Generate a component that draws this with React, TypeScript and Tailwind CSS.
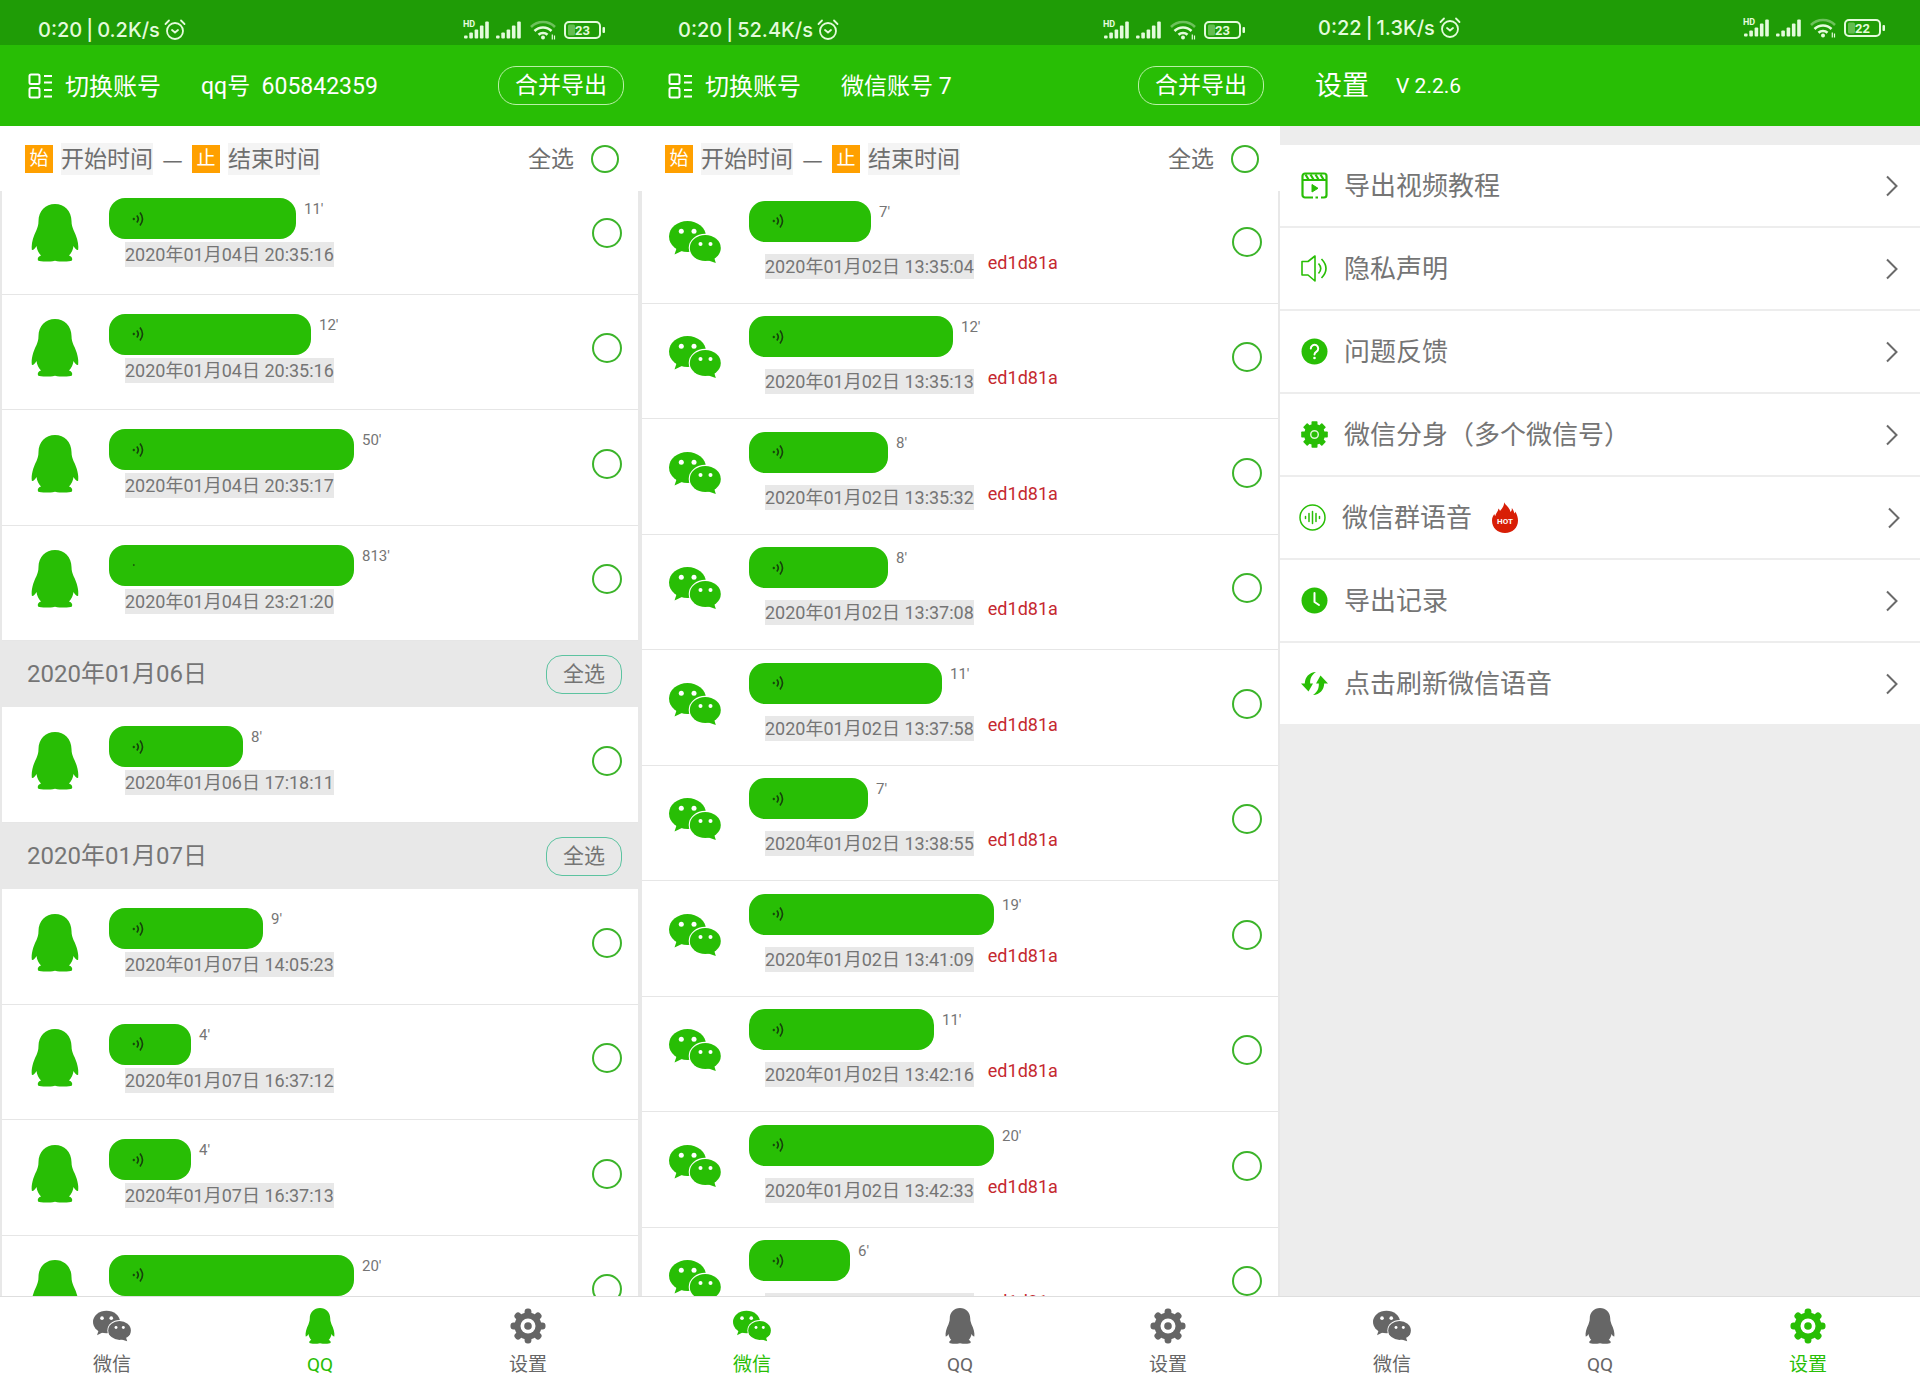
import type { ReactNode } from 'react'
import clsx from 'clsx'

type Voice = { length: string; width: number; time: string; silent?: boolean }
type Tab = 'wechat' | 'qq' | 'settings'

const qqGroups: { date?: string; items: Voice[] }[] = [
  {
    items: [
      { length: "11'", width: 187, time: '2020年01月04日 20:35:16' },
      { length: "12'", width: 202, time: '2020年01月04日 20:35:16' },
      { length: "50'", width: 245, time: '2020年01月04日 20:35:17' },
      { length: "813'", width: 245, time: '2020年01月04日 23:21:20', silent: true },
    ],
  },
  {
    date: '2020年01月06日',
    items: [{ length: "8'", width: 134, time: '2020年01月06日 17:18:11' }],
  },
  {
    date: '2020年01月07日',
    items: [
      { length: "9'", width: 154, time: '2020年01月07日 14:05:23' },
      { length: "4'", width: 82, time: '2020年01月07日 16:37:12' },
      { length: "4'", width: 82, time: '2020年01月07日 16:37:13' },
      { length: "20'", width: 245, time: '2020年01月07日 16:40:02' },
    ],
  },
]

const wechatItems: Voice[] = [
  { length: "7'", width: 122, time: '2020年01月02日 13:35:04' },
  { length: "12'", width: 204, time: '2020年01月02日 13:35:13' },
  { length: "8'", width: 139, time: '2020年01月02日 13:35:32' },
  { length: "8'", width: 139, time: '2020年01月02日 13:37:08' },
  { length: "11'", width: 193, time: '2020年01月02日 13:37:58' },
  { length: "7'", width: 119, time: '2020年01月02日 13:38:55' },
  { length: "19'", width: 245, time: '2020年01月02日 13:41:09' },
  { length: "11'", width: 185, time: '2020年01月02日 13:42:16' },
  { length: "20'", width: 245, time: '2020年01月02日 13:42:33' },
  { length: "6'", width: 101, time: '2020年01月02日 13:43:20' },
]

function PenguinIcon({ className }: { className?: string }) {
  return (
    <svg viewBox="0 0 47 58" fill="currentColor" className={className} aria-hidden="true">
      <path d="M23.5 0C33 0 40 7 40 17c0 4 1 6 2 9 3.5 7 5.5 14 4.6 20-1.8.2-3.3-1.8-4.6-4-.5 4-2 7-4.5 9.5 2.8 1 3.7 2.5 3 5-2.5 1.300-11 1.5-17 .2-6 1.3-14.5 1.1-17-.2-.7-2.5.2-4 3-5C7 49 5.5 46 5 42c-1.3 2.2-2.8 4.2-4.6 4C-.5 40 1.5 33 5 26c1-3 2-5 2-9C7 7 14 0 23.5 0Z" />
    </svg>
  )
}

function WechatIcon({ className }: { className?: string }) {
  return (
    <svg viewBox="0 0 52 42" fill="currentColor" className={className} aria-hidden="true">
      <ellipse cx="18.5" cy="15.5" rx="18.5" ry="15.5" />
      <path d="M8 26 5.5 33.5 15 29Z" />
      <ellipse cx="36.3" cy="27" rx="16.6" ry="14.2" fill="#fff" />
      <ellipse cx="36.3" cy="27" rx="15.5" ry="13" />
      <path d="m45 36 1.8 6L38 39Z" />
      <g fill="#fff">
        <circle cx="12.3" cy="10.3" r="2.5" />
        <circle cx="25" cy="10.3" r="2.5" />
        <circle cx="31.5" cy="23" r="2" />
        <circle cx="41.5" cy="23" r="2" />
      </g>
    </svg>
  )
}

function GearIcon({ className }: { className?: string }) {
  return (
    <svg viewBox="-18 -18 36 36" fill="currentColor" className={className} aria-hidden="true">
      {[0, 45, 90, 135].map((a) => (
        <rect key={a} x="-3.4" y="-17.5" width="6.8" height="35" rx="3" transform={`rotate(${a})`} />
      ))}
      <circle r="13.5" />
      <circle r="7.5" fill="#fff" />
      <circle r="3.8" />
    </svg>
  )
}

function StatusIcons({ battery }: { battery: string }) {
  const bars = [3, 6, 9, 13, 17]
  return (
    <svg viewBox="0 0 143 22" className="h-[22px] w-[143px]" fill="#e4fbdc" aria-hidden="true">
      <text x="0" y="8" fontSize="9" fontWeight="700">HD</text>
      {bars.map((h, i) => (
        <rect key={h} x={1 + i * 5.3} y={19.5 - h} width="3.6" height={h} rx="1" />
      ))}
      {bars.map((h, i) => (
        <rect key={h} x={33 + i * 5.3} y={19.5 - h} width="3.6" height={h} rx="1" />
      ))}
      <g fill="none" stroke="#e4fbdc" strokeWidth="2.6">
        <path d="M68 8a17 17 0 0 1 24 0" opacity=".4" />
        <path d="M71.5 12a12 12 0 0 1 17 0" />
        <path d="M75.5 15.8a6.5 6.5 0 0 1 9 0" />
      </g>
      <circle cx="80" cy="18.5" r="2" />
      <path d="M89.3 15.5v5M91.5 16.5v4" stroke="#e4fbdc" strokeWidth="1.2" />
      <rect x="102" y="3" width="35" height="16" rx="4" fill="none" stroke="#e4fbdc" strokeWidth="2" />
      <rect x="105" y="5.5" width="7" height="11" rx="1.5" opacity=".35" />
      <rect x="139.5" y="8" width="2.5" height="6" rx="1" />
      <text x="119.5" y="15.5" fontSize="13" fontWeight="700" textAnchor="middle">{battery}</text>
    </svg>
  )
}

function StatusBar({ time, speed, battery, raised }: { time: string; speed: string; battery: string; raised?: boolean }) {
  return (
    <div
      className={clsx(
        'flex h-[45px] shrink-0 items-center justify-between bg-[#1f9c06] pl-[38px] pr-[34px] text-[#e4fbdc]',
        raised ? 'pt-[11px]' : 'pt-[15px]',
      )}
    >
      <div className="flex items-center font-['Inter'] text-xl leading-5 font-medium">
        <span>{time}</span>
        <span className="mx-1">|</span>
        <span>{speed}</span>
        <svg viewBox="0 0 22 22" fill="none" stroke="currentColor" strokeWidth="1.8" strokeLinecap="round" className="ml-1 size-[22px]" aria-hidden="true">
          <circle cx="11" cy="12" r="8" />
          <path d="M8 11l3 2.5 3-2.5M1.5 5 5 1.5M20.5 5 17 1.5" />
        </svg>
      </div>
      <StatusIcons battery={battery} />
    </div>
  )
}

function AccountHeader({ account }: { account: string }) {
  return (
    <header className="flex h-[81px] shrink-0 items-center bg-[#28be05] pl-7 pr-4 text-white">
      <button type="button" className="flex items-center gap-3 text-2xl leading-8">
        <svg viewBox="0 0 25 26" fill="none" stroke="currentColor" strokeWidth="2" className="h-[26px] w-[25px]" aria-hidden="true">
          <rect x="1.5" y="1.5" width="10" height="9.5" rx="1.5" />
          <rect x="1.5" y="15" width="10" height="9.5" rx="1.5" />
          <path d="M16 3h8M16 9.5h8M16 17h8M16 23.5h8" />
        </svg>
        <span className="pt-0.5">切换账号</span>
      </button>
      <span className="ml-10 pt-0.5 text-[23px] leading-8 whitespace-pre">{account}</span>
      <button type="button" className="ml-auto h-[39px] rounded-[18px] border border-[#b9f0a8] px-4 text-[23px] leading-8">
        合并导出
      </button>
    </header>
  )
}

function Circle({ label, className }: { label: string; className: string }) {
  return (
    <input
      type="checkbox"
      aria-label={label}
      className={clsx('shrink-0 appearance-none rounded-full border-2 border-[#3cb42a] bg-white checked:bg-[#28be05]', className)}
    />
  )
}

function FilterBar() {
  return (
    <div className="flex h-[65px] shrink-0 items-center gap-2 bg-white pl-[25px] pr-[21px] text-[23px] leading-[31px] text-[#6e6e6e]">
      <span className="size-7 bg-[#ffa000] text-center text-[19px] leading-7 text-white">始</span>
      <button type="button" className="bg-[#f4f4f4] pt-px">开始时间</button>
      <span lang="zh-CN" className="w-[23px] text-center [font-family:'Noto_Sans_CJK_SC']">—</span>
      <span className="size-7 bg-[#ffa000] text-center text-[19px] leading-7 text-white">止</span>
      <button type="button" className="bg-[#f4f4f4] pt-px">结束时间</button>
      <label className="ml-auto flex items-center gap-[17px]">
        <span className="pt-px">全选</span>
        <Circle label="全选" className="size-7" />
      </label>
    </div>
  )
}

function VoiceBubble({ voice }: { voice: Voice }) {
  return (
    <div className="flex items-start gap-2">
      <button
        type="button"
        aria-label={`播放 ${voice.length}`}
        className="flex h-[41px] items-center rounded-2xl bg-[#28be05] pl-[23px]"
        style={{ width: voice.width }}
      >
        <svg viewBox="0 0 12 16" fill="none" stroke="#16400c" strokeWidth="1.6" className="h-4 w-3" aria-hidden="true">
          <circle cx="1.8" cy="8" r={voice.silent ? 0.6 : 0.9} fill="#16400c" strokeWidth="0.6" />
          {!voice.silent && <path d="M4.8 4.5q3 3.5 0 7M8 1.5q5 6.5 0 13" />}
        </svg>
      </button>
      <span className="pt-px text-[15px] leading-5 text-[#757575]">{voice.length}</span>
    </div>
  )
}

function VoiceRow({ voice, source }: { voice: Voice; source: 'qq' | 'wechat' }) {
  return (
    <li className="flex h-[115px] items-center gap-7 border-b border-[#e6e6e6] bg-white pb-2 pl-[27px] pr-4 odd:h-[116px]">
      <div className="flex w-[52px] shrink-0 justify-center text-[#28be05]">
        {source === 'qq' ? <PenguinIcon className="h-[58px] w-[48px]" /> : <WechatIcon className="h-[42px] w-[52px]" />}
      </div>
      <div className={clsx('flex flex-1 flex-col', source === 'qq' ? 'gap-[3px]' : 'gap-3 pb-1')}>
        <VoiceBubble voice={voice} />
        <div className="ml-4 flex items-start gap-3.5 text-lg">
          <time className="bg-[#e8e8e8] leading-[25px] text-[#757575]">{voice.time}</time>
          {source === 'wechat' && <span className="leading-[18px] text-[#c5282f]">ed1d81a</span>}
        </div>
      </div>
      <Circle label={voice.time} className="size-[30px]" />
    </li>
  )
}

function TabBar({ active }: { active: Tab }) {
  const tabs: { id: Tab; label: string; icon: ReactNode }[] = [
    { id: 'wechat', label: '微信', icon: <WechatIcon className="h-8 w-[38px]" /> },
    { id: 'qq', label: 'QQ', icon: <PenguinIcon className="h-9 w-[30px]" /> },
    { id: 'settings', label: '设置', icon: <GearIcon className="size-9" /> },
  ]
  return (
    <nav className="grid h-[91px] shrink-0 grid-cols-3 border-t border-[#dedede] bg-white px-2 pt-[11px]">
      {tabs.map((tab) => (
        <a
          key={tab.id}
          href={`#${tab.id}`}
          className={clsx('flex flex-col items-center gap-[11px] text-[19px] leading-5', tab.id === active ? 'text-[#28be05]' : 'text-[#666]')}
        >
          <span className="flex h-9 items-center">{tab.icon}</span>
          {tab.label}
        </a>
      ))}
    </nav>
  )
}

const iconProps = { viewBox: '0 0 27 27', className: 'size-[27px] shrink-0 text-[#28be05]', 'aria-hidden': true }

const settings: { label: string; icon: ReactNode; hot?: boolean }[] = [
  {
    label: '导出视频教程',
    icon: (
      <svg {...iconProps} fill="none" stroke="currentColor" strokeWidth="2.2">
        <path d="M12 25.5H4A2.5 2.5 0 0 1 1.5 23V4A2.5 2.5 0 0 1 4 1.500h19A2.5 2.5 0 0 1 25.5 4v19a2.5 2.5 0 0 1-2.5 2.5h-3M14.5 25.5H17" />
        <path d="M1.5 8h24M4.5 2.5l3 5M9.5 2.5l3 5M14.5 2.5l3 5M19.5 2.5l3 5" />
        <path d="M11 12.5V20l6-3.7Z" fill="currentColor" strokeWidth="1" />
      </svg>
    ),
  },
  {
    label: '隐私声明',
    icon: (
      <svg {...iconProps} fill="none" stroke="currentColor" strokeWidth="1.6" strokeLinejoin="round">
        <path d="M1 6.500h6L14 1v25l-7-6H1ZM17.5 8.500q4.500 5 0 10M20.5 4q9 9.500 0 19" />
      </svg>
    ),
  },
  {
    label: '问题反馈',
    icon: (
      <svg {...iconProps}>
        <circle cx="13.5" cy="13.5" r="13" fill="currentColor" />
        <path d="M9.8 10.5a3.7 3.7 0 1 1 5.7 3.1c-1.3.9-2 1.5-2 3" fill="none" stroke="#fff" strokeWidth="2" strokeLinecap="round" />
        <circle cx="13.5" cy="20" r="1.3" fill="#fff" />
      </svg>
    ),
  },
  {
    label: '微信分身（多个微信号）',
    icon: (
      <svg {...iconProps} viewBox="-13.5 -13.5 27 27" fill="currentColor">
        {[0, 45, 90, 135].map((a) => (
          <rect key={a} x="-3" y="-13.3" width="6" height="26.6" rx="0.8" transform={`rotate(${a})`} />
        ))}
        <circle r="10.5" />
        <circle r="3.8" fill="none" stroke="#d9f5d0" strokeWidth="1.5" />
      </svg>
    ),
  },
  {
    label: '微信群语音',
    hot: true,
    icon: (
      <svg {...iconProps} fill="none" stroke="currentColor" strokeWidth="1.5" strokeLinecap="round">
        <circle cx="13.5" cy="13.5" r="12.5" />
        <path d="M6.5 12.5v2M10 9.5v8M13.5 7.5v12M17 9.5v8M20.5 12.5v2" />
      </svg>
    ),
  },
  {
    label: '导出记录',
    icon: (
      <svg {...iconProps}>
        <circle cx="13.5" cy="13.5" r="13" fill="currentColor" />
        <path d="M13.5 6v9l4.5 3" fill="none" stroke="#fff" strokeWidth="2" strokeLinecap="round" strokeLinejoin="round" />
      </svg>
    ),
  },
  {
    label: '点击刷新微信语音',
    icon: (
      <svg {...iconProps} fill="currentColor">
        <path d="M15 2C8 2.5 4 7 3.8 13.5H0l7.5 8 4.5-8H9.2C8.8 8.500 11 4.500 15 2Z" />
        <path d="M12 25c7-.5 11-5 11.2-11.5H27l-7.5-8-4.5 8h2.800C18.200 18.500 16 22.500 12 25Z" />
      </svg>
    ),
  },
]

function HotBadge() {
  return (
    <svg viewBox="0 0 26 31" className="ml-1 h-[31px] w-[26px]" aria-hidden="true">
      <path d="M12 0c1 3 5.5 5 6.5 10 1.2-1 1.5-2.5 1.3-4 1.7 2 2.2 4 2.7 5.5.6-.5.8-1.3.8-2 1.700 3 2.700 6 2.700 9C26 26 20.500 31 13 31S0 26 0 18.500c0-3 1-4.500 2.300-6.500.2 1 .5 1.500 1 2 .5-3 3-4.500 3.200-7.500.8.8 1.200 1.500 1.500 2.500C10 6.500 12.500 4 12 0Z" fill="#d81e06" />
      <text x="13" y="22" fontSize="8" fontWeight="700" fill="#fff" textAnchor="middle">HOT</text>
    </svg>
  )
}

function QQScreen() {
  return (
    <section className="flex min-w-0 flex-col">
      <StatusBar time="0:20" speed="0.2K/s" battery="23" />
      <AccountHeader account="qq号  605842359" />
      <FilterBar />
      <div className="min-h-0 flex-1 overflow-hidden border-x-2 border-[#e8e8e8]">
        {/* list is scrolled a little under the filter bar */}
        <div className="-mt-3">
          {qqGroups.map((group, i) => (
            <div key={i}>
              {group.date && (
                <div className="flex h-[66px] items-center justify-between bg-[#e8e8e8] pl-[25px] pr-4 text-[#757575]">
                  <h2 className="text-2xl">{group.date}</h2>
                  <button type="button" className="h-[39px] w-[76px] rounded-2xl border border-[#5cc3a0] text-[21px] leading-8">全选</button>
                </div>
              )}
              <ul>
                {group.items.map((voice, j) => (
                  <VoiceRow key={j} voice={voice} source="qq" />
                ))}
              </ul>
            </div>
          ))}
        </div>
      </div>
      <TabBar active="qq" />
    </section>
  )
}

function WechatScreen() {
  return (
    <section className="flex min-w-0 flex-col">
      <StatusBar time="0:20" speed="52.4K/s" battery="23" />
      <AccountHeader account="微信账号 7" />
      <FilterBar />
      <div className="min-h-0 flex-1 overflow-hidden border-x-2 border-[#e8e8e8]">
        <ul className="-mt-[3px]">
          {wechatItems.map((voice) => (
            <VoiceRow key={voice.time} voice={voice} source="wechat" />
          ))}
        </ul>
      </div>
      <TabBar active="wechat" />
    </section>
  )
}

function SettingsScreen() {
  return (
    <section className="flex min-w-0 flex-col">
      <StatusBar time="0:22" speed="1.3K/s" battery="22" raised />
      <header className="flex h-[81px] shrink-0 items-center gap-[27px] bg-[#28be05] pt-0.5 pl-[35px] text-white">
        <h1 className="text-[27px]">设置</h1>
        <span className="text-[21px]">V 2.2.6</span>
      </header>
      <ul className="min-h-0 flex-1 bg-[#ededed] pt-[19px]">
        {settings.map(({ label, icon, hot }) => (
          <li key={label} className="border-b-2 border-[#ededed] bg-white">
            <button
              type="button"
              className={clsx('flex h-[81px] w-full items-center gap-4 text-left text-[26px] leading-9 text-[#757575]', hot ? 'pl-[19px] pr-5' : 'pl-[21px] pr-[22px]')}
            >
              {icon}
              <span>{label}</span>
              {hot && <HotBadge />}
              <svg viewBox="0 0 12 22" fill="none" stroke="#6a6a6a" strokeWidth="2" className="ml-auto h-[22px] w-3" aria-hidden="true">
                <path d="m1 1.5 9.5 9.5L1 20.5" />
              </svg>
            </button>
          </li>
        ))}
      </ul>
      <TabBar active="settings" />
    </section>
  )
}

export default function App() {
  return (
    <main className="grid h-screen grid-cols-3 grid-rows-1 bg-white font-[Roboto,'Noto_Sans_CJK_SC',sans-serif]">
      <QQScreen />
      <WechatScreen />
      <SettingsScreen />
    </main>
  )
}
